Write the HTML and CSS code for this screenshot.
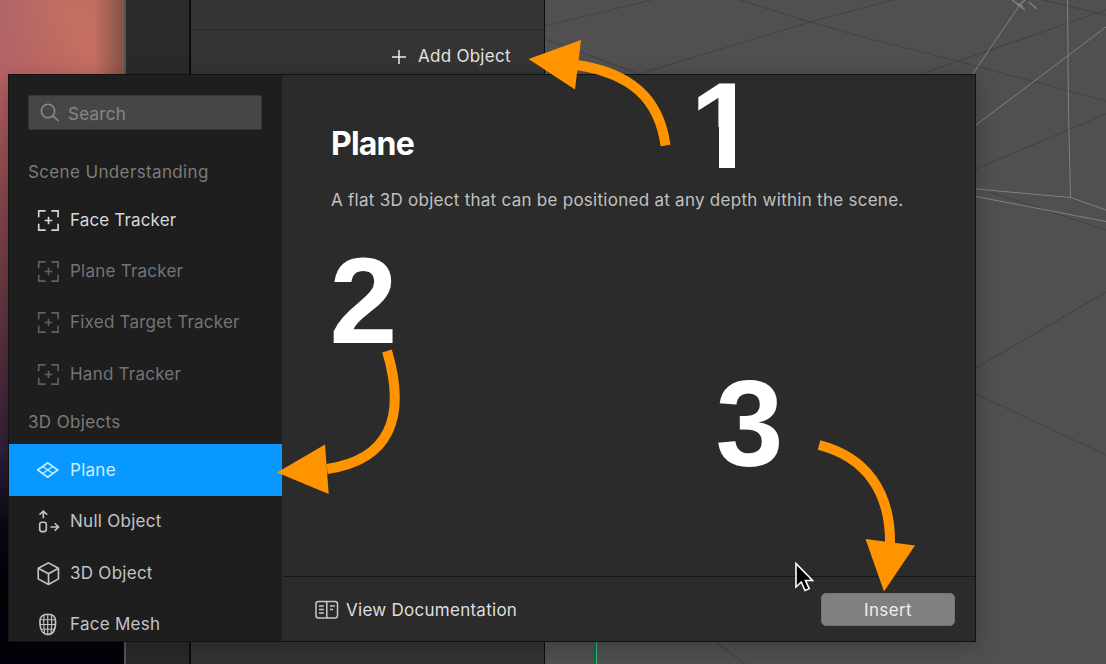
FILE: index.html
```html
<!DOCTYPE html>
<html lang="en">
<head>
<meta charset="utf-8">
<title>Add Object</title>
<link rel="stylesheet" href="styles.css">
</head>
<body>
<svg class="defs" width="0" height="0">
  <symbol id="tracker" viewBox="0 0 24 24"><path d="M1.800 8.500V2H9M15 2h7v6.500M22 15.500V22h-7M9 22H1.800v-6.500M12 8v8M8 12h8"/></symbol>
</svg>
<main class="app">
  <div class="preview"></div>
  <div class="gutter"></div>
  <section class="scene-panel">
    <div class="scene-list"></div>
    <div class="add-bar">
      <svg class="plus" viewBox="0 0 14 14"><path d="M7 0v14M0 7h14"/></svg>
      <span class="add-label">Add Object</span>
    </div>
  </section>
  <section class="viewport">
    <svg class="grid" viewBox="545 0 561 664">
      <g class="grid-dark">
        <path d="M545 26 655-1M737-1 810 22M800 19 870 39 950 59 1106 101M642 73 810 22 897-1M545 39 645 76M918 75 1106 10M976 169 1106 114M1035-2 1106 15M976 368 1106 292M976 394 1106 455M715 641 746 665M990 192 1106 230"/>
      </g>
      <g class="grid-light">
        <path d="M1021 3 972 75M1106 27 976 125M1067.500 0 1068.500 112 1070.500 197.500 1106 210M976 189 1070.500 197.500M976 196.500 1106 221.500"/>
      </g>
      <path class="gizmo" d="M1012 0l13 10M1018 6l7-6M1029 2l8 7M1016 3l7 4"/>
      <path class="axis-dark" d="M595 642v22"/><path class="axis" d="M596.500 642v22"/>
    </svg>
  </section>

  <div class="dialog">
    <aside class="sidebar">
      <div class="search">
        <svg class="search-icon" viewBox="0 0 20 20"><circle cx="8" cy="8" r="6.700"/><path d="M12.800 12.800 18.500 18"/></svg>
        <span>Search</span>
      </div>
      <h2 class="group">Scene Understanding</h2>
      <ul class="items">
        <li class="item bright"><svg class="icon"><use href="#tracker"/></svg><span>Face Tracker</span></li>
        <li class="item off"><svg class="icon"><use href="#tracker"/></svg><span>Plane Tracker</span></li>
        <li class="item off"><svg class="icon"><use href="#tracker"/></svg><span>Fixed Target Tracker</span></li>
        <li class="item off"><svg class="icon"><use href="#tracker"/></svg><span>Hand Tracker</span></li>
      </ul>
      <h2 class="group">3D Objects</h2>
      <ul class="items">
        <li class="item selected"><svg class="icon" viewBox="0 0 24 24"><path d="M.7 11.500 11.200 4 21.700 11.500 11.200 19Z"/><path class="thin" d="M6 7.800 16.700 15.200M16.400 7.800 6 15.200"/></svg><span>Plane</span></li>
        <li class="item"><svg class="icon" viewBox="0 0 24 24"><rect x="2.800" y="12.800" width="6.900" height="9.700" rx="2.400"/><path d="M6.600 8.500V1.300M2.600 5 6.600 1.100l4 3.900M14 17.700H22.300M18.500 13.800l4 3.900-4 3.900"/></svg><span>Null Object</span></li>
        <li class="item"><svg class="icon" viewBox="0 0 24 24"><path d="M12 .9 22.400 6.600v11L12 23.500 1.300 17.600V6.600ZM1.300 6.600 12 12.300l10.400-5.700M12 12.300v11"/></svg><span>3D Object</span></li>
        <li class="item"><svg class="icon" viewBox="0 0 24 24"><path d="M11.200 1.300c5.300 0 8.200 2.400 8.200 7.500 0 7-2.200 13.600-8.200 13.600S3 15.800 3 8.800c0-5.100 2.900-7.500 8.200-7.500Z"/><path class="thin" d="M11.200 2v20M7.300 2.300c-.6 6-.4 13 .6 19M15.100 2.300c.6 6 .4 13-.6 19M3.700 7h15M3.200 12h16M4.200 17h14"/></svg><span>Face Mesh</span></li>
      </ul>
    </aside>
    <section class="detail">
      <div class="info">
        <h1 class="title">Plane</h1>
        <p class="desc">A flat 3D object that can be positioned at any depth within the scene.</p>
      </div>
      <footer class="footer">
        <a class="docs"><svg class="book" viewBox="0 0 24 20"><rect x="1" y="1.500" width="21.500" height="16.500" rx="2.500"/><path d="M11.800 1.500V18M4 6h4.800M4 9.500h4.800M4 13h4.800M15 6h4.800M15 9.500h3"/></svg><span>View Documentation</span></a>
        <button class="insert">Insert</button>
      </footer>
    </section>
  </div>

  <span class="step one">1</span>
  <span class="step two">2</span>
  <span class="step three">3</span>
  <svg class="arrows" viewBox="0 0 1106 664">
    <path class="tail" d="M665.500 145.500C659 97 629 73 577 65"/>
    <path class="head" d="M528.500 59 581 40 575 89.500Z"/>
    <path class="tail" d="M387 351C407 418 389 460 327 469"/>
    <path class="head" d="M277 472.500 325 444.500 328.700 494Z"/>
    <path class="tail" d="M819 445C866 457 891 492 890 545"/>
    <path class="head" d="M865.500 539 915 545.500 884 591.500Z"/>
    <path class="cursor" d="M796 563.500V587L801.300 582 805 590.500 809.200 588.700 805.500 580.500H812.500Z"/>
  </svg>
</main>
</body>
</html>
```
FILE: styles.css
```css
* { box-sizing: border-box; }
body { margin: 0; overflow: hidden; background: #505050; font-family: Inter, "Liberation Sans", sans-serif; font-size: 17px; letter-spacing: .27px; color: #c4c4c4; }
h1, h2, p, ul { margin: 0; padding: 0; font-weight: 400; }
svg { display: block; fill: none; }
.defs { position: absolute; }
.app { position: relative; width: 1106px; height: 664px; display: grid; grid-template-columns: 124px 65px 356px 561px; overflow: hidden; }

.preview {
  background:
    linear-gradient(90deg, transparent 94px, rgba(80,60,45,.55) 124px) 0 0 / 124px 74px no-repeat,
    linear-gradient(60deg, rgba(203,116,94,0) 0, rgba(201,114,94,.8) 85px) 0 0 / 124px 74px no-repeat,
    linear-gradient(180deg, #a25d70 0, #b86264 80px, #8f4b50 180px, #6d3b44 280px, #4c2a3c 380px, #30203a 450px, #0a0711 530px, #020106 590px, #04030b 664px);
}
.gutter { background: #2a2a2a; border-left: 2px solid #555; }
.scene-panel { background: #343434; border-left: 2px solid #0c0c0c; border-right: 1px solid #0c0c0c; display: flex; flex-direction: column; }
.scene-list { height: 30px; border-bottom: 1px solid #292929; }
.add-bar { height: 53px; display: flex; align-items: center; padding: 0 0 1px 201px; color: #e2e2e2; }
.plus { width: 14px; height: 14px; margin: 2px 12px 0 0; stroke: #eee; stroke-width: 1.5; }
.viewport { background: #505050; }
.grid { width: 561px; height: 664px; }
.grid-dark { stroke: #434343; stroke-width: 1.1; }
.grid-light { stroke: #808080; stroke-width: 1; }
.gizmo { stroke: #808080; stroke-width: 1.5; }
.axis { stroke: #55a887; stroke-width: 1; }
.axis-dark { stroke: #08713f; stroke-width: 2; }

.dialog { position: absolute; left: 8px; top: 74px; width: 968px; height: 568px; display: grid; grid-template-columns: 273px 1fr; background: #2b2b2b; border: 1px solid #121212; box-shadow: 0 5px 20px rgba(0,0,0,.25); overflow: hidden; }
.sidebar { background: #1e1e1e; padding-top: 20px; overflow: hidden; min-height: 0; height: 566px; }
.search { display: flex; align-items: center; gap: 8px; margin: 0 20px 19px 19px; height: 35px; padding: 2px 0 0 11px; background: #464646; border: 1px solid #363636; color: #868686; border-radius: 2px; }
.search-icon { width: 20px; height: 20px; margin-bottom: 1px; stroke: #8a8a8a; stroke-width: 1.6; }
.group { height: 45px; display: flex; align-items: center; padding: 1px 0 0 19px; font-size: 17px; letter-spacing: .36px; color: #7b7b7b; }
.items { list-style: none; }
.item { height: 51.35px; display: flex; align-items: center; gap: 10px; padding-left: 28px; }
.icon { width: 23px; height: 23px; margin-top: 1px; stroke: currentColor; stroke-width: 1.7; }
.icon .thin { stroke-width: 1.2; }
.bright { color: #d8d8d8; letter-spacing: .15px; }
.off { color: #747474; letter-spacing: .23px; }
.off .icon { stroke: #616161; }
.selected { background: #0898ff; color: #c9f0fb; }
.detail { display: flex; flex-direction: column; min-width: 0; height: 566px; border-left: 1px solid #292929; }
.info { flex: 1; padding: 49px 0 0 48px; }
.title { font-size: 32px; line-height: 40px; font-weight: 700; color: #fff; letter-spacing: -.8px; }
.desc { margin-top: 25px; line-height: 22px; color: #c1c1c1; white-space: nowrap; }
.footer { height: 65px; border-top: 1px solid #171717; display: flex; align-items: center; justify-content: space-between; padding: 1px 20px 0 32px; }
.docs { display: flex; align-items: center; gap: 7px; color: #dedede; }
.book { width: 24px; height: 20px; margin-top: 1px; stroke: #c8c8c8; stroke-width: 1.5; }
.insert { width: 134px; height: 33px; padding: 0; border: 1px solid #747474; border-radius: 5px; background: #808080; color: #eee; font: 17px Inter, sans-serif; letter-spacing: .4px; }

.step { position: absolute; font: 700 122px/122px "Liberation Sans", Arial, sans-serif; letter-spacing: 0; color: #fff; }
/* The numeral one shows only its flag and stem, without the foot. */
.one { left: 690px; top: 65px; clip-path: polygon(0 0, 45px 0, 45px 100%, 29px 100%, 29px 62px, 0 62px); }
.two { left: 329.5px; top: 240px; }
.three { left: 715.5px; top: 363px; }
.arrows { position: absolute; left: 0; top: 0; width: 1106px; height: 664px; }
.tail { stroke: #ff9300; stroke-width: 10; }
.head { fill: #ff9300; }
.cursor { fill: #000; stroke: #fff; stroke-width: 1.6; }
```
